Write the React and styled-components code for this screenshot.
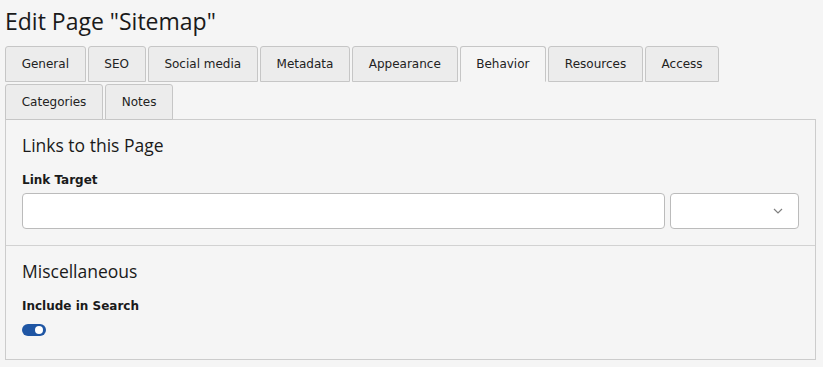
import React, { useState } from "react";
import styled, { createGlobalStyle } from "styled-components";

const GlobalStyle = createGlobalStyle`
  html, body {
    margin: 0;
    padding: 0;
    background: #f5f5f5;
  }
  body {
    font-family: "DejaVu Sans", Verdana, sans-serif;
    color: #1e1e1e;
  }
`;

const Page = styled.div`
  padding: 7px 7px 0 5px;
  width: 811px;
`;

const Title = styled.h1`
  margin: 0 0 11px 0;
  font-family: "Open Sans", "Noto Sans", sans-serif;
  font-weight: 400;
  font-size: 23px;
  line-height: 28px;
  color: #1a1a1a;
`;

const TabList = styled.div`
  display: flex;
  flex-wrap: wrap;
  gap: 2px;
  margin-bottom: -1px;
  position: relative;
  z-index: 1;
`;

const Tab = styled.button`
  height: 36px;
  padding: 0 15.7px;
  border: 1px solid #c6c6c6;
  border-bottom-color: ${(p) => (p.$active ? "transparent" : "#c6c6c6")};
  border-radius: 3px 3px 0 0;
  background: ${(p) => (p.$active ? "#f5f5f5" : "#ececec")};
  font-family: "DejaVu Sans", Verdana, sans-serif;
  font-size: 12px;
  line-height: 34px;
  color: #222;
  cursor: pointer;
`;

const Panel = styled.div`
  border: 1px solid #cccccc;
  background: #f5f5f5;
`;

const Section = styled.div`
  padding: 15px 16px 16px;
  & + & {
    border-top: 1px solid #d2d2d2;
  }
`;

const SectionTitle = styled.h2`
  margin: 0;
  font-family: "Open Sans", "Noto Sans", sans-serif;
  font-weight: 400;
  font-size: 17.5px;
  line-height: 21px;
  color: #1a1a1a;
`;

const Label = styled.label`
  display: block;
  margin: 15px 0 4px;
  font-size: 12px;
  font-weight: 700;
  line-height: 18px;
  color: #1a1a1a;
`;

const FieldRow = styled.div`
  display: flex;
  gap: 5px;
`;

const TextInput = styled.input`
  flex: 1;
  height: 36px;
  box-sizing: border-box;
  border: 1px solid #bbbbbb;
  border-radius: 4px;
  background: #fff;
  padding: 0 10px;
  font-size: 12px;
  outline: none;
`;

const Select = styled.div`
  width: 129px;
  height: 36px;
  box-sizing: border-box;
  border: 1px solid #bbbbbb;
  border-radius: 4px;
  background: #fff;
  display: flex;
  align-items: center;
  justify-content: flex-end;
  padding-right: 15px;
`;

const ToggleWrap = styled.div`
  height: 19px;
  margin-top: 9px;
  display: flex;
  align-items: flex-start;
`;

const Toggle = styled.button`
  width: 24px;
  height: 12px;
  padding: 0;
  border: none;
  border-radius: 6px;
  background: ${(p) => (p.$on ? "#1f56a4" : "#bbb")};
  display: flex;
  align-items: center;
  justify-content: ${(p) => (p.$on ? "flex-end" : "flex-start")};
  cursor: pointer;

  &::after {
    content: "";
    width: 8px;
    height: 8px;
    margin: 0 3px;
    border-radius: 50%;
    background: #fff;
  }
`;

const tabs = [
  "General",
  "SEO",
  "Social media",
  "Metadata",
  "Appearance",
  "Behavior",
  "Resources",
  "Access",
  "Categories",
  "Notes",
];

function Chevron() {
  return (
    <svg width="10" height="6" viewBox="0 0 10 6">
      <polyline points="1,1 5,5 9,1" fill="none" stroke="#808080" strokeWidth="1.2" />
    </svg>
  );
}

export default function App() {
  const [active, setActive] = useState("Behavior");
  const [search, setSearch] = useState(true);

  return (
    <Page>
      <GlobalStyle />
      <Title>Edit Page "Sitemap"</Title>
      <TabList>
        {tabs.map((t) => (
          <Tab key={t} $active={t === active} onClick={() => setActive(t)}>
            {t}
          </Tab>
        ))}
      </TabList>
      <Panel>
        <Section>
          <SectionTitle>Links to this Page</SectionTitle>
          <Label>Link Target</Label>
          <FieldRow>
            <TextInput type="text" />
            <Select>
              <Chevron />
            </Select>
          </FieldRow>
        </Section>
        <Section>
          <SectionTitle>Miscellaneous</SectionTitle>
          <Label>Include in Search</Label>
          <ToggleWrap>
            <Toggle $on={search} onClick={() => setSearch(!search)} />
          </ToggleWrap>
        </Section>
      </Panel>
    </Page>
  );
}
